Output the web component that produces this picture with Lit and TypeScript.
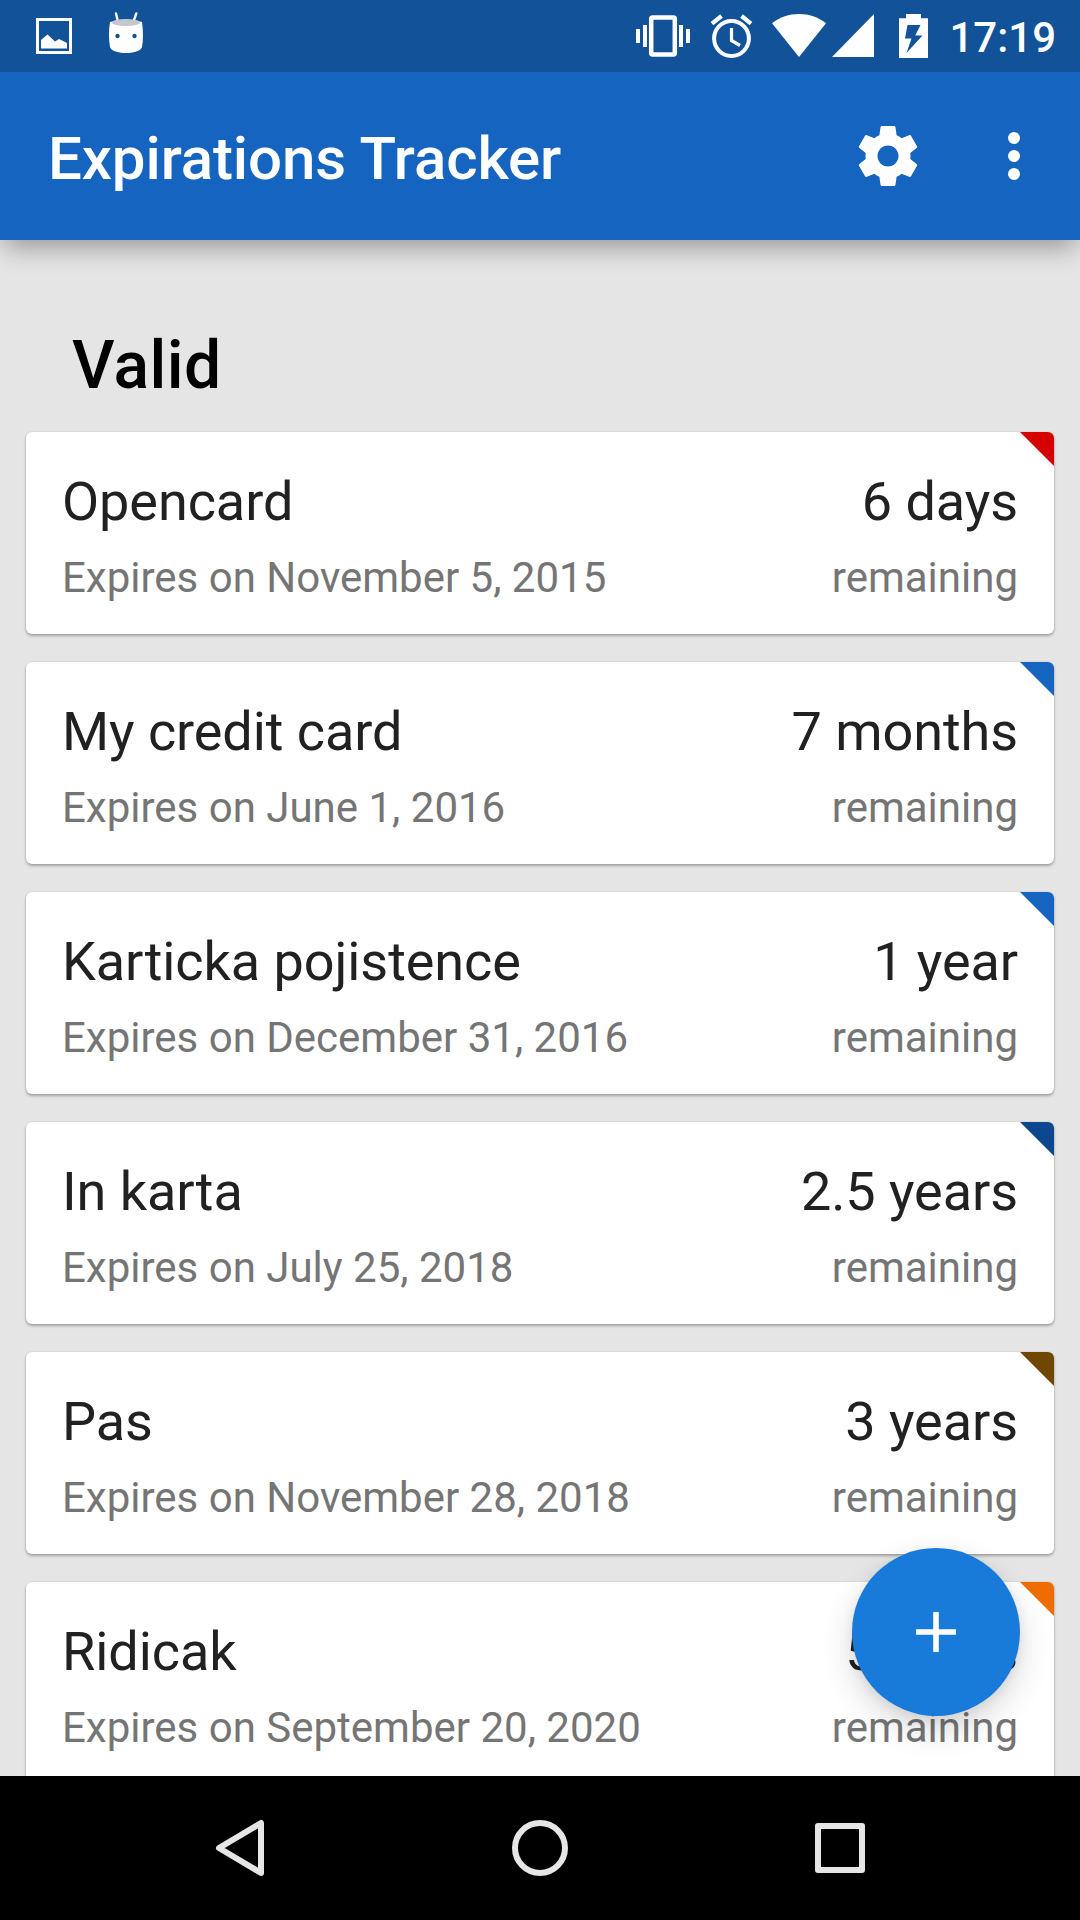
import { LitElement, html, css, svg } from "lit";
import { customElement, property } from "lit/decorators.js";

interface Expiration {
  name: string;
  date: string;
  left: string;
  tint: string;
}

const ITEMS: Expiration[] = [
  { name: "Opencard", date: "November 5, 2015", left: "6 days", tint: "#d50000" },
  { name: "My credit card", date: "June 1, 2016", left: "7 months", tint: "#1565c0" },
  { name: "Karticka pojistence", date: "December 31, 2016", left: "1 year", tint: "#1565c0" },
  { name: "In karta", date: "July 25, 2018", left: "2.5 years", tint: "#0d478f" },
  { name: "Pas", date: "November 28, 2018", left: "3 years", tint: "#704700" },
  { name: "Ridicak", date: "September 20, 2020", left: "5 years", tint: "#ef6c00" },
];

@customElement("status-bar")
export class StatusBar extends LitElement {
  static styles = css`
    :host {
      display: flex;
      align-items: center;
      height: 72px;
      padding: 0 24px 0 36px;
      box-sizing: border-box;
      background: #115299;
      color: #fff;
      position: relative;
      z-index: 2;
    }
    svg { display: block; fill: #fff; height: 72px; flex: none; }
    .group { display: flex; align-items: center; }
    .left { gap: 36px; }
    .right { margin-left: auto; }
    .alarm { margin-left: 20px; }
    .wifi { margin-left: 19px; }
    .signal { margin-left: 6px; }
    .battery { margin-left: 25px; }
    .clock {
      margin-left: 21px;
      font: 500 42px/72px Roboto, sans-serif;
      padding-top: 2px;
      height: 70px;
    }
  `;
  render() {
    return html`
      <div class="group left">
        <svg width="36" viewBox="0 0 36 72">
          <path fill-rule="evenodd" d="M0 18h36v36H0zM3 21v30h30V21z" />
          <path d="M5 40l6.500-5.500 7.500 7 4-2.500 8 4v5.500H5z" />
        </svg>
        <svg width="36" viewBox="0 0 36 72">
          <path d="M8 13.500l2.200 9M28.300 13.500l-3.200 9" stroke="#fff" stroke-width="2.400" stroke-linecap="round" />
          <path d="M2 22q16-5 32 0c1.300 9 1.300 18 0 25-1 3.500-7 6-16 6s-15-2.500-16-6c-1.400-8-1.400-17 0-25z" />
          <ellipse cx="18" cy="22.500" rx="14" ry="3.500" fill="#c3c8ce" />
          <circle cx="9.500" cy="36" r="2.200" fill="#115299" />
          <circle cx="26.500" cy="36" r="2.200" fill="#115299" />
        </svg>
      </div>
      <div class="group right">
        <svg width="54" viewBox="0 0 54 72">
          <path d="M0 29h4v14H0zM7 25h4v22H7zM43 25h4v22h-4zM50 29h4v14h-4z" />
          <rect x="15.200" y="17.500" width="23.600" height="37" rx="1.500" fill="none" stroke="#fff" stroke-width="4.500" />
        </svg>
        <svg class="alarm" width="43" viewBox="0 0 43 72">
          <circle cx="21.500" cy="38.500" r="17.400" fill="none" stroke="#fff" stroke-width="4" />
          <path d="M21.500 28v12.500l8.500 5" fill="none" stroke="#fff" stroke-width="3.200" />
          <path d="M2 23.700l9.500-7.700M41 23.700l-9.500-7.700" stroke="#fff" stroke-width="4.200" />
        </svg>
        <svg class="wifi" width="54" viewBox="0 0 54 72">
          <path d="M27 57L0 23.200C8 17 17 14 27 14s19 3 27 9.200z" />
        </svg>
        <svg class="signal" width="42" viewBox="0 0 42 72"><path d="M0 57h42V14z" /></svg>
        <svg class="battery" width="29" viewBox="0 0 29 72">
          <path fill-rule="evenodd" d="M0 18.300h7V14h15v4.300h7V58H0zM8.500 25L6 38.500h6.500L7.500 53 23.500 35.500h-7.300L21.500 25z" />
        </svg>
        <div class="clock">17:19</div>
      </div>
    `;
  }
}

@customElement("app-bar")
export class AppBar extends LitElement {
  static styles = css`
    :host {
      display: flex;
      align-items: center;
      height: 168px;
      padding: 0 30px 0 48px;
      box-sizing: border-box;
      background: #1565c0;
      color: #fff;
      position: relative;
      z-index: 1;
      box-shadow: 0 12px 24px -4px rgba(0, 0, 0, 0.33);
    }
    .title {
      margin: 0;
      flex: 1;
      font: 500 60px/72px Roboto, sans-serif;
      letter-spacing: -0.1px;
      padding-top: 6px;
    }
    .actions { display: flex; gap: 54px; }
    svg { display: block; width: 72px; height: 72px; fill: #fff; }
  `;
  render() {
    return html`
      <h1 class="title">Expirations Tracker</h1>
      <div class="actions">
        <svg viewBox="0 0 24 24">
          <path d="M19.430 12.980c.04-.32.07-.64.07-.98s-.03-.66-.07-.98l2.110-1.650c.19-.15.24-.42.12-.64l-2-3.460c-.12-.22-.39-.3-.61-.22l-2.490 1c-.52-.4-1.080-.73-1.690-.98l-.38-2.650C14.460 2.180 14.250 2 14 2h-4c-.25 0-.46.18-.49.42l-.38 2.650c-.61.25-1.170.59-1.690.98l-2.490-1c-.23-.09-.49 0-.61.22l-2 3.460c-.13.22-.07.49.12.64l2.110 1.650c-.04.32-.07.65-.07.98s.03.66.07.98l-2.110 1.650c-.19.15-.24.42-.12.64l2 3.460c.12.22.39.3.61.22l2.490-1c.52.4 1.080.73 1.690.98l.38 2.650c.03.24.24.42.49.42h4c.25 0 .46-.18.49-.42l.38-2.650c.61-.25 1.170-.59 1.690-.98l2.490 1c.23.09.49 0 .61-.22l2-3.460c.12-.22.07-.49-.12-.64l-2.110-1.650zM12 15.500c-1.930 0-3.500-1.570-3.500-3.500s1.570-3.500 3.500-3.500 3.500 1.570 3.500 3.500-1.570 3.500-3.500 3.500z" />
        </svg>
        <svg viewBox="0 0 24 24">
          <circle cx="12" cy="6" r="2" /><circle cx="12" cy="12" r="2" /><circle cx="12" cy="18" r="2" />
        </svg>
      </div>
    `;
  }
}

@customElement("expiration-card")
export class ExpirationCard extends LitElement {
  @property({ attribute: false }) item!: Expiration;

  static styles = css`
    :host {
      display: flex;
      justify-content: space-between;
      flex: none;
      height: 202px;
      padding: 38px 36px 0;
      box-sizing: border-box;
      border-radius: 6px;
      background: #fff;
      overflow: hidden;
      position: relative;
      box-shadow: 0 2px 3px rgba(0, 0, 0, 0.28), 0 0 2px rgba(0, 0, 0, 0.14);
      font-family: Roboto, sans-serif;
      white-space: nowrap;
    }
    .col { display: flex; flex-direction: column; gap: 19px; }
    .end { text-align: right; }
    .main { font-size: 54px; line-height: 64px; letter-spacing: -0.07px; color: #212121; }
    .sub { font-size: 42px; line-height: 50px; color: #757575; }
    .corner {
      position: absolute;
      top: 0;
      right: 0;
      width: 34px;
      height: 34px;
      clip-path: polygon(0 0, 100% 0, 100% 100%);
    }
  `;
  render() {
    const { name, date, left, tint } = this.item;
    return html`
      <div class="col">
        <div class="main">${name}</div>
        <div class="sub">Expires on ${date}</div>
      </div>
      <div class="col end">
        <div class="main">${left}</div>
        <div class="sub">remaining</div>
      </div>
      <div class="corner" style="background:${tint}"></div>
    `;
  }
}

@customElement("nav-bar")
export class NavBar extends LitElement {
  static styles = css`
    :host {
      display: flex;
      justify-content: center;
      align-items: center;
      gap: 240px;
      height: 144px;
      background: #000;
    }
    svg { display: block; width: 60px; height: 60px; fill: none; stroke: #e6e6e6; stroke-width: 6; stroke-linejoin: round; }
  `;
  render() {
    const shapes = [
      svg`<path d="M9 30L51 5v50z" />`,
      svg`<circle cx="30" cy="30" r="25" />`,
      svg`<rect x="8" y="8" width="44" height="44" />`,
    ];
    return shapes.map((s) => html`<svg viewBox="0 0 60 60">${s}</svg>`);
  }
}

@customElement("app-root")
export class AppRoot extends LitElement {
  static styles = css`
    :host {
      display: flex;
      flex-direction: column;
      width: 1080px;
      height: 1920px;
      overflow: hidden;
      background: #e5e5e5;
    }
    .content {
      flex: 1;
      min-height: 0;
      overflow: hidden;
      position: relative;
      padding: 86px 26px 0;
    }
    .heading {
      margin: 0 0 26px;
      padding-left: 46px;
      font: 500 66px/80px Roboto, sans-serif;
      letter-spacing: 0.4px;
      color: #000;
    }
    .list { display: flex; flex-direction: column; gap: 28px; }
    .fab {
      position: absolute;
      right: 60px;
      bottom: 60px;
      width: 168px;
      height: 168px;
      padding: 0;
      border: 0;
      border-radius: 50%;
      background: #187bd9;
      display: grid;
      place-items: center;
      box-shadow: 0 14px 32px rgba(0, 0, 0, 0.15), 0 3px 12px rgba(0, 0, 0, 0.08);
    }
    .plus { width: 40px; height: 40px; stroke: #fff; stroke-width: 5.6; display: block; }
  `;
  render() {
    return html`
      <status-bar></status-bar>
      <app-bar></app-bar>
      <main class="content">
        <h2 class="heading">Valid</h2>
        <div class="list">
          ${ITEMS.map((item) => html`<expiration-card .item=${item}></expiration-card>`)}
        </div>
        <button class="fab">
          <svg class="plus" viewBox="0 0 40 40"><path d="M20 0v40M0 20h40" /></svg>
        </button>
      </main>
      <nav-bar></nav-bar>
    `;
  }
}
